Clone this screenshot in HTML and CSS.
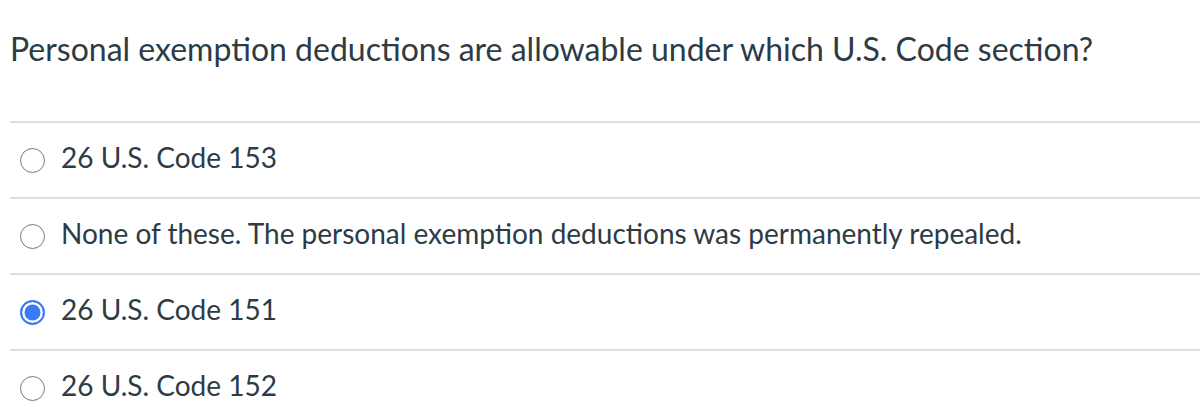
FILE: index.html
```html
<!DOCTYPE html>
<html lang="en">
<head>
<meta charset="utf-8">
<title>Quiz question</title>
<link rel="stylesheet" href="styles.css">
</head>
<body>
<div class="question">
  <p class="question-text">Personal exemption deductions are allowable under which U.S. Code section?</p>
  <div class="answers">
    <label class="answer">
      <span class="radio"></span>
      <span class="answer-text">26 U.S. Code 153</span>
    </label>
    <label class="answer">
      <span class="radio"></span>
      <span class="answer-text">None of these. The personal exemption deductions was permanently repealed.</span>
    </label>
    <label class="answer">
      <span class="radio checked"></span>
      <span class="answer-text">26 U.S. Code 151</span>
    </label>
    <label class="answer">
      <span class="radio"></span>
      <span class="answer-text">26 U.S. Code 152</span>
    </label>
  </div>
</div>
</body>
</html>
```
FILE: styles.css
```css
html, body {
  margin: 0;
  padding: 0;
  background: #ffffff;
}
body {
  font-family: Lato, "Open Sans", sans-serif;
  color: #2d3b45;
  overflow: hidden;
}
.question {
  padding-left: 10px;
  padding-top: 29px;
}
.question-text {
  margin: 0 0 52px 0;
  font-size: 32px;
  line-height: 40px;
}
.answers {
  display: flex;
  flex-direction: column;
}
.answer {
  display: flex;
  align-items: center;
  height: 74px;
  border-top: 2px solid #dedede;
}
.radio {
  flex: none;
  box-sizing: border-box;
  width: 25px;
  height: 25px;
  margin-left: 10px;
  border: 1.5px solid #7a7a7a;
  border-radius: 50%;
}
.radio.checked {
  border: 2px solid #3b7cf5;
  background: #3b7cf5;
  box-shadow: inset 0 0 0 2.5px #ffffff;
}
.answer-text {
  margin-left: 16px;
  font-size: 28px;
  line-height: 32px;
  margin-top: -6px;
}
```
